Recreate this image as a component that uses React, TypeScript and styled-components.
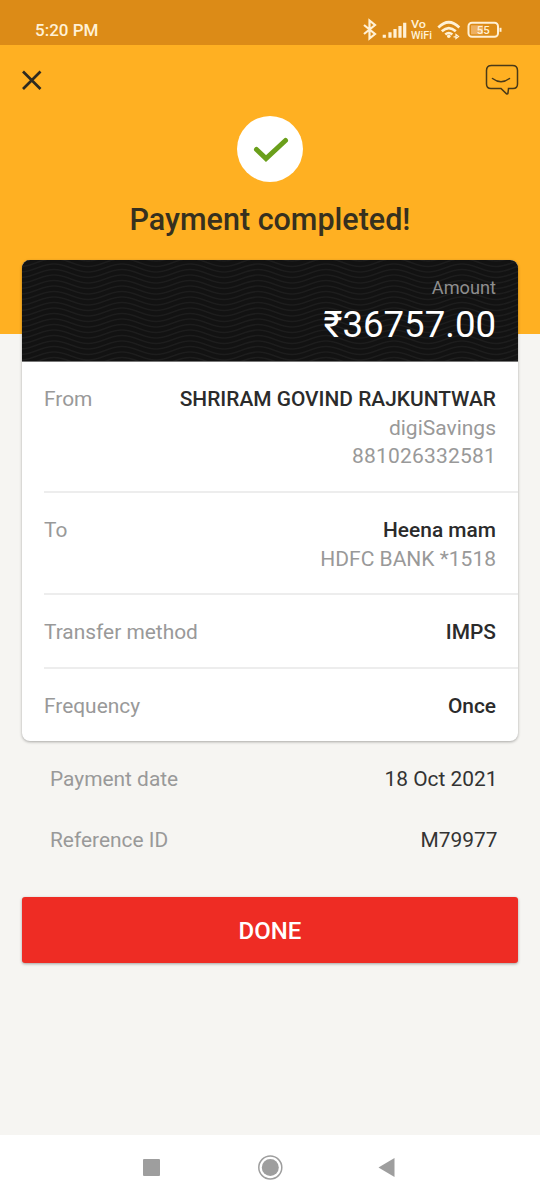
import React from "react";
import styled, { createGlobalStyle } from "styled-components";

const GlobalStyle = createGlobalStyle`
  * { box-sizing: border-box; }
  body { margin: 0; background: #f6f5f2; font-family: Roboto, "Liberation Sans", sans-serif; }
`;

const Screen = styled.div`
  width: 540px;
  height: 1200px;
  display: flex;
  flex-direction: column;
  background: linear-gradient(#ffb022 334px, #f6f5f2 334px);
`;

const StatusBar = styled.header`
  flex: none;
  height: 45px;
  padding: 15px 37px 0 35px;
  display: flex;
  justify-content: space-between;
  align-items: flex-start;
  background: #dc8b17;
  color: #fff1d6;
`;

const Clock = styled.span`
  font-size: 17px;
  line-height: 31px;
  height: 30px;
  font-weight: 500;
`;

const StatusIcons = styled.div`
  display: flex;
  height: 30px;
`;

const Toolbar = styled.nav`
  flex: none;
  height: 71px;
  padding: 19px 21px 0;
  display: flex;
  justify-content: space-between;
  align-items: flex-start;
`;

const IconButton = styled.button`
  padding: 0;
  border: 0;
  background: none;
  display: flex;
`;

const Result = styled.section`
  flex: none;
  height: 144px;
  display: flex;
  flex-direction: column;
  align-items: center;
`;

const Badge = styled.div`
  width: 66px;
  height: 66px;
  border-radius: 50%;
  background: #fff;
`;

const Title = styled.h1`
  margin: 18px 0 0;
  font-size: 30.5px;
  line-height: 40px;
  font-weight: 500;
  color: #36301f;
  white-space: nowrap;
`;

const Card = styled.section`
  flex: none;
  margin: 0 22px;
  border-radius: 8px;
  background: #fff;
  box-shadow: 0 1px 3px rgba(0, 0, 0, 0.32);
  overflow: hidden;
`;

const AmountPanel = styled.div`
  height: 102px;
  background: #121212;
  display: grid;
  border-bottom: 1px solid #777;
`;

const Waves = styled.svg`
  grid-area: 1 / 1;
`;

const AmountText = styled.div`
  grid-area: 1 / 1;
  padding: 15px 22px 0 0;
  text-align: right;
`;

const AmountLabel = styled.div`
  font-size: 18.2px;
  line-height: 25px;
  color: #8e8e8e;
`;

const AmountValue = styled.div`
  font-size: 36.6px;
  line-height: 50px;
  color: #fff;
`;

const DetailRow = styled.div<{ $height: number; $last?: boolean }>`
  height: ${(p) => p.$height}px;
  margin-left: 22px;
  padding: 23px 22px 0 0;
  display: flex;
  justify-content: space-between;
  border-bottom: ${(p) => (p.$last ? "0" : "2px solid #ededed")};
`;

const Label = styled.span`
  font-size: 20.9px;
  line-height: 28.5px;
  color: #999;
`;

const Values = styled.div`
  text-align: right;
  font-size: 21px;
  line-height: 28.5px;
  color: #999;
`;

const Primary = styled.div`
  font-size: 20.9px;
  font-weight: 500;
  color: #2b2b2b;
`;

const AccountNumber = styled.div`
  letter-spacing: 0.2px;
`;

const Meta = styled.section`
  flex: none;
  height: 156px;
  padding: 7px 42.5px 0 50px;
`;

const MetaRow = styled.div`
  height: 61.5px;
  display: flex;
  align-items: center;
  justify-content: space-between;
`;

const MetaValue = styled.span`
  font-size: 20.9px;
  color: #333;
`;

const DoneButton = styled.button`
  flex: none;
  height: 66px;
  margin: 0 22px;
  padding: 2px 0 0;
  border: 0;
  border-radius: 3px;
  background: #ee2c24;
  box-shadow: 0 1px 3px rgba(0, 0, 0, 0.35);
  color: #fff;
  font-family: inherit;
  font-size: 24px;
  font-weight: 500;
`;

const NavBar = styled.footer`
  flex: none;
  height: 65px;
  margin-top: auto;
  background: #fff;
`;

function WavePattern() {
  const lines = Array.from({ length: 22 }, (_, i) => i * 5.5 - 7);
  return (
    <Waves width="496" height="101" fill="none" stroke="#1d1d1d" strokeWidth="1.6">
      {lines.map((y) => (
        <path key={y} d={`M-36 ${y}${"c14 0 20 8 34 8s20 -8 34 -8".repeat(8)}`} />
      ))}
    </Waves>
  );
}

function StatusGlyphs() {
  return (
    <StatusIcons>
      <svg width="142" height="30" viewBox="361 15 142 30" fill="none" stroke="#fff1d6" strokeWidth="2">
        <path d="M364 25l11 9-5.500 4.500v-18l5.500 4.500-11 9" strokeWidth="2.200" />
        <path d="M384.300 34.700v3M390 32.300v5.400M395 29v8.700M400 26v11.700M404.700 22.700v15" strokeWidth="3.200" />
        <g fill="#fff1d6" stroke="none" fontFamily="Roboto" fontWeight="500">
          <text x="411" y="28" fontSize="11.500" textLength="15" lengthAdjust="spacingAndGlyphs">Vo</text>
          <text x="411" y="38.800" fontSize="10.500" textLength="21" lengthAdjust="spacingAndGlyphs">WiFi</text>
        </g>
        <path d="M438.300 27.500q10.500-10.500 21 0M441.800 31.300q7-6.500 14 0M445.300 34.500q3.500-3 7 0" strokeWidth="2.600" />
        <circle cx="448.800" cy="36.300" r="1.800" fill="#fff1d6" stroke="none" />
        <path d="M453.500 36.800h2.500M456 34.500l2.500 2-2.500 2z" strokeWidth="1.300" />
        <rect x="468.500" y="22.800" width="29.500" height="14" rx="3.500" />
        <rect x="471" y="25.300" width="12" height="9" fill="#eeb060" stroke="none" />
        <path d="M500.500 27.800v4" />
        <text x="483.200" y="34" textAnchor="middle" fill="#fff1d6" stroke="none" fontFamily="Roboto" fontWeight="500" fontSize="11.500" textLength="13" lengthAdjust="spacingAndGlyphs">55</text>
      </svg>
    </StatusIcons>
  );
}

export default function App() {
  return (
    <>
      <GlobalStyle />
      <Screen>
        <StatusBar>
          <Clock>5:20 PM</Clock>
          <StatusGlyphs />
        </StatusBar>
        <Toolbar>
          <IconButton aria-label="Close">
            <svg width="22" height="32" viewBox="21 64 22 32" stroke="#2e2a20" strokeWidth="2.700">
              <path d="M23 71.500l17.500 17.500M40.500 71.500l-17.500 17.500" />
            </svg>
          </IconButton>
          <IconButton aria-label="Chat">
            <svg width="35" height="32" viewBox="484 64 35 32" fill="none" stroke="#4a3a18" strokeWidth="1.500">
              <path d="M490.500 65.500h22q5 0 5 5v13.500q0 4.500-4.500 4.500h-4.500l-.5 4.500q-.3 1.500-1.500.8l-5.500-5.300h-10q-4.500 0-4.500-4.500v-13.500q0-5 5-5z" />
              <path d="M492.500 78.500q8.500 6.500 17 0" strokeLinecap="round" />
            </svg>
          </IconButton>
        </Toolbar>
        <Result>
          <Badge>
            <svg width="66" height="66" fill="none" stroke="#6a9f1b" strokeWidth="5" strokeLinecap="round">
              <path d="M19.500 33.500l9.500 9 19.500-18" />
            </svg>
          </Badge>
          <Title>Payment completed!</Title>
        </Result>
        <Card>
          <AmountPanel>
            <WavePattern />
            <AmountText>
              <AmountLabel>Amount</AmountLabel>
              <AmountValue>₹36757.00</AmountValue>
            </AmountText>
          </AmountPanel>
          <DetailRow $height={131}>
            <Label>From</Label>
            <Values>
              <Primary>SHRIRAM GOVIND RAJKUNTWAR</Primary>
              <div>digiSavings</div>
              <AccountNumber>881026332581</AccountNumber>
            </Values>
          </DetailRow>
          <DetailRow $height={102}>
            <Label>To</Label>
            <Values>
              <Primary>Heena mam</Primary>
              <div>HDFC BANK *1518</div>
            </Values>
          </DetailRow>
          <DetailRow $height={74}>
            <Label>Transfer method</Label>
            <Values><Primary>IMPS</Primary></Values>
          </DetailRow>
          <DetailRow $height={72} $last>
            <Label>Frequency</Label>
            <Values><Primary>Once</Primary></Values>
          </DetailRow>
        </Card>
        <Meta>
          <MetaRow>
            <Label>Payment date</Label>
            <MetaValue>18 Oct 2021</MetaValue>
          </MetaRow>
          <MetaRow>
            <Label>Reference ID</Label>
            <MetaValue>M79977</MetaValue>
          </MetaRow>
        </Meta>
        <DoneButton>DONE</DoneButton>
        <NavBar>
          <svg width="540" height="65" fill="#9e9e9e">
            <rect x="143" y="24" width="17" height="17" rx="1" />
            <circle cx="270.300" cy="32.500" r="11.500" fill="none" stroke="#9e9e9e" strokeWidth="1.500" />
            <circle cx="270.300" cy="32.500" r="8.500" />
            <path d="M378.500 32.500l16-9.500v19z" />
          </svg>
        </NavBar>
      </Screen>
    </>
  );
}
